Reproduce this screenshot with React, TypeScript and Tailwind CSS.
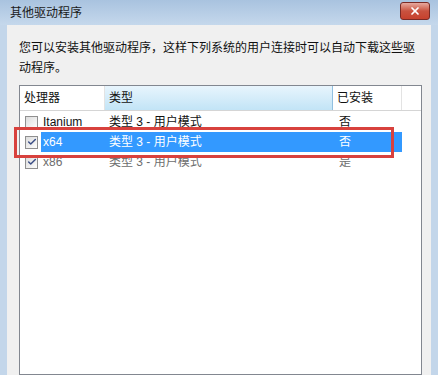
import { Check, X } from "lucide-react";

const font = { fontFamily: '"Liberation Sans", "Noto Sans CJK SC", sans-serif' };

type Row = { cpu: string; type: string; installed: string; checked: boolean; state: "normal" | "selected" | "disabled" };

const rows: Row[] = [
  { cpu: "Itanium", type: "类型 3 - 用户模式", installed: "否", checked: false, state: "normal" },
  { cpu: "x64", type: "类型 3 - 用户模式", installed: "否", checked: true, state: "selected" },
  { cpu: "x86", type: "类型 3 - 用户模式", installed: "是", checked: true, state: "disabled" },
];

function CheckBox({ checked }: { checked: boolean }) {
  return (
    <div className="flex h-[13px] w-[13px] shrink-0 items-center justify-center border border-[#8f8f8f] bg-gradient-to-br from-[#dcdcdc] to-[#fdfdfd]">
      {checked && <Check className="h-[10px] w-[10px] text-[#3c4f86]" strokeWidth={3.5} />}
    </div>
  );
}

export default function App() {
  return (
    <div className="relative flex h-[375px] w-[438px] flex-col overflow-hidden bg-[#c3d6ea] text-[12px]" style={font}>
      {/* title bar */}
      <div className="flex h-[25px] shrink-0 items-center justify-between bg-gradient-to-b from-[#a9c3df] to-[#c5d8ec] pl-[10px] pr-[8px]">
        <span className="text-[12px] leading-none text-[#1a1a1a]">其他驱动程序</span>
        <div className="mt-[-4px] flex h-[18px] w-[30px] items-center justify-center rounded-[3px] border border-[#7a2a25] bg-gradient-to-b from-[#e6a89e] via-[#c9523f] to-[#c7412d]">
          <X className="h-[12px] w-[12px] text-white" strokeWidth={3.5} />
        </div>
      </div>

      {/* client area */}
      <div className="mx-[7px] flex flex-1 flex-col bg-[#f0f0f0] pl-[12px] pr-[9px] pt-[13px]">
        <p className="leading-[20px] text-[#111]">
          您可以安装其他驱动程序，这样下列系统的用户连接时可以自动下载这些驱动程序。
        </p>

        <div className="mt-[7px] flex-1 border border-[#828790] bg-white">
          {/* header */}
          <div className="flex h-[25px] border-b border-[#d5d5d5]">
            <div className="flex w-[85px] items-center border-r border-[#e3e3e3] pl-[4px] text-[#111]">处理器</div>
            <div className="flex w-[228px] items-center border-r border-[#92c0e0] bg-gradient-to-b from-[#e8f5fd] to-[#c2e4f6] pl-[4px] text-[#111]">
              类型
            </div>
            <div className="flex w-[69px] items-center border-r border-[#e3e3e3] pl-[4px] text-[#111]">已安装</div>
            <div className="flex-1" />
          </div>

          {/* rows */}
          <div className="pt-[1px]">
            {rows.map((r) => (
              <div key={r.cpu} className="flex h-[20px] items-center pl-[5px]">
                <CheckBox checked={r.checked} />
                <div
                  className={
                    "ml-[3px] flex h-full w-[361px] items-center " +
                    (r.state === "selected"
                      ? "bg-[#3399ff] text-white"
                      : r.state === "disabled"
                        ? "text-[#6d6d6d]"
                        : "text-[#111]")
                  }
                >
                  <span className="w-[64px] pl-[2px]">{r.cpu}</span>
                  <span className="w-[228px] pl-[4px]">{r.type}</span>
                  <span className="pl-[6px]">{r.installed}</span>
                </div>
              </div>
            ))}
          </div>
        </div>
      </div>

      {/* red annotation box */}
      <div className="absolute left-[14px] top-[127px] h-[31px] w-[380px] border-[3px] border-[#d8413d]" />
    </div>
  );
}
